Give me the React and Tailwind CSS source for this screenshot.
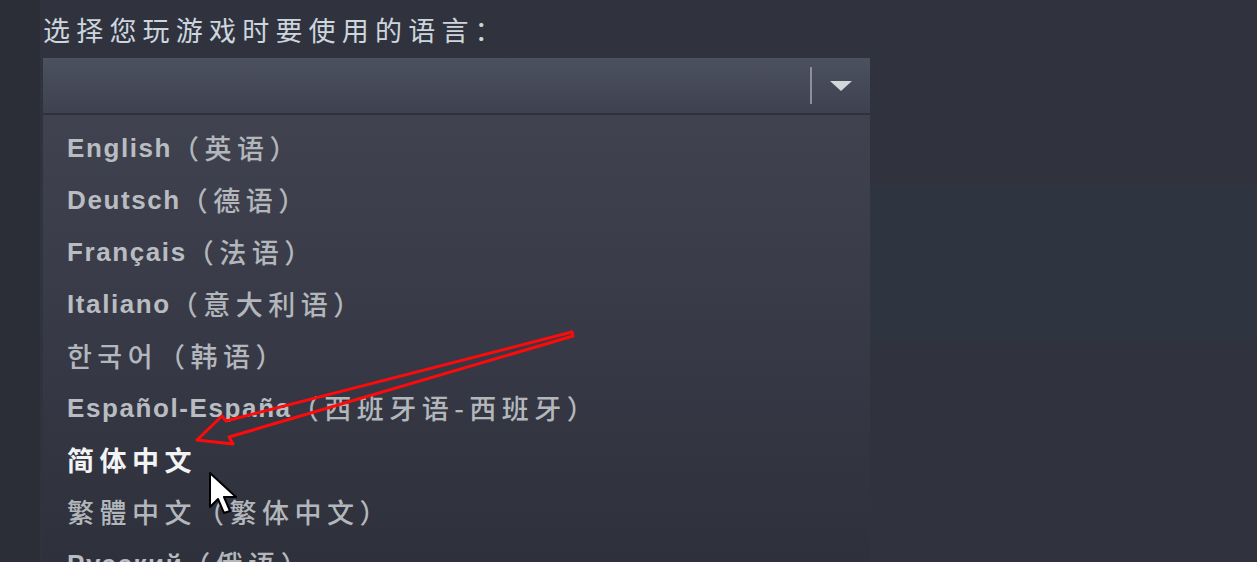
import React from 'react';

const languages = [
  { latin: 'English', cjk: '（英语）' },
  { latin: 'Deutsch', cjk: '（德语）' },
  { latin: 'Français', cjk: '（法语）' },
  { latin: 'Italiano', cjk: '（意大利语）' },
  { latin: '', cjk: '한국어（韩语）' },
  { latin: 'Español-España', cjk: '（西班牙语-西班牙）' },
  { latin: '', cjk: '简体中文', selected: true },
  { latin: '', cjk: '繁體中文（繁体中文）' },
  { latin: 'Русский', cjk: '（俄语）' },
];

function LangRow({ item }) {
  return (
    <div className="h-[52px] flex items-center pl-6 whitespace-nowrap">
      {item.latin && (
        <span className="text-[26px] font-bold tracking-[1.6px] text-[#b9bdc2] font-['Liberation_Sans',sans-serif]">
          {item.latin}
        </span>
      )}
      <span
        className={`text-[27px] tracking-[5.5px] font-['Noto_Sans_CJK_SC','Noto_Sans_CJK_KR',sans-serif] ${
          item.selected ? 'text-[#f2f3f5] font-bold' : 'text-[#b3b7bc] font-medium'
        }`}
      >
        {item.cjk}
      </span>
    </div>
  );
}

export default function App() {
  return (
    <div className="relative w-[1257px] h-[562px] overflow-hidden bg-[#30333e]">
      {/* faint band across the right side */}
      <div className="absolute left-0 right-0 top-[185px] h-[155px] bg-[#2e3540]" />
      <div className="absolute left-0 top-0 bottom-0 w-[40px] bg-[#2b2d37]" />

      <div className="relative pl-[43px] pt-[12px]">
        <div className="h-[36px] leading-[36px] text-[27px] tracking-[6.2px] text-[#cdd6df] font-['Noto_Sans_CJK_SC',sans-serif] mb-[10px] whitespace-nowrap">
          选择您玩游戏时要使用的语言：
        </div>

        <div className="w-[827px]">
          <div className="h-[57px] flex items-center justify-end bg-gradient-to-b from-[#4c515f] to-[#3e4250] border-b-2 border-[#2f323c]">
            <div className="w-[2px] h-[37px] bg-[#8b909b]" />
            <div className="w-[58px] flex justify-center">
              <svg width="22" height="10" viewBox="0 0 22 10">
                <polygon points="0,0 22,0 11,10" fill="#d3d6db" />
              </svg>
            </div>
          </div>
          <div className="pt-[7px] h-[500px] bg-gradient-to-b from-[#40434f] via-[#363945] to-[#2c2e38]">
            {languages.map((l, i) => (
              <LangRow key={i} item={l} />
            ))}
          </div>
        </div>
      </div>

      {/* red annotation arrow */}
      <svg className="absolute left-0 top-0 pointer-events-none" width="1257" height="562">
        <polygon
          points="572,332 226,421 222,416 197,440 233,444 229,437 573,336"
          fill="none"
          stroke="#ff0a0a"
          strokeWidth="3"
          strokeLinejoin="round"
        />
      </svg>

      {/* mouse cursor */}
      <svg className="absolute left-[208px] top-[471px]" width="34" height="46" viewBox="0 0 17 23">
        <path
          d="M1 1 L1 18 L5 14 L8 21 L11 20 L8 13 L14 13 Z"
          fill="#ffffff"
          stroke="#000000"
          strokeWidth="1"
          strokeLinejoin="round"
        />
      </svg>
    </div>
  );
}
